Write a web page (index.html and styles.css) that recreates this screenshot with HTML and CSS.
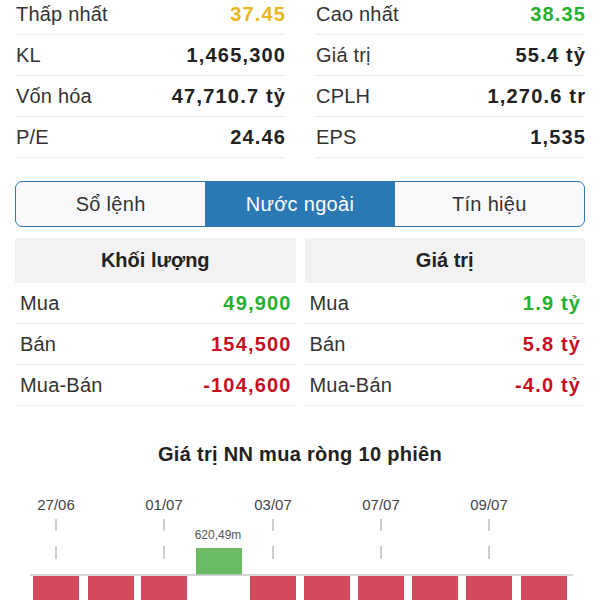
FILE: index.html
```html
<!DOCTYPE html>
<html lang="vi">
<head>
    <meta charset="UTF-8">
    <meta name="viewport" content="width=device-width, initial-scale=1.0">
    <title>Chi tiết cổ phiếu</title>
    <link rel="stylesheet" href="styles.css">
</head>
<body>
    <div class="stats">
        <div class="stat-col">
            <div class="stat-row"><span>Thấp nhất</span><b class="yellow">37.45</b></div>
            <div class="stat-row"><span>KL</span><b>1,465,300</b></div>
            <div class="stat-row"><span>Vốn hóa</span><b>47,710.7 tỷ</b></div>
            <div class="stat-row"><span>P/E</span><b>24.46</b></div>
        </div>
        <div class="stat-col">
            <div class="stat-row"><span>Cao nhất</span><b class="green">38.35</b></div>
            <div class="stat-row"><span>Giá trị</span><b>55.4 tỷ</b></div>
            <div class="stat-row"><span>CPLH</span><b>1,270.6 tr</b></div>
            <div class="stat-row"><span>EPS</span><b>1,535</b></div>
        </div>
    </div>

    <div class="segment">
        <div class="seg-item">Sổ lệnh</div>
        <div class="seg-item active">Nước ngoài</div>
        <div class="seg-item">Tín hiệu</div>
    </div>

    <div class="foreign">
        <div class="f-col">
            <div class="f-head">Khối lượng</div>
            <div class="f-row"><span>Mua</span><b class="green">49,900</b></div>
            <div class="f-row"><span>Bán</span><b class="red">154,500</b></div>
            <div class="f-row"><span>Mua-Bán</span><b class="red">-104,600</b></div>
        </div>
        <div class="f-col">
            <div class="f-head">Giá trị</div>
            <div class="f-row"><span>Mua</span><b class="green">1.9 tỷ</b></div>
            <div class="f-row"><span>Bán</span><b class="red">5.8 tỷ</b></div>
            <div class="f-row"><span>Mua-Bán</span><b class="red">-4.0 tỷ</b></div>
        </div>
    </div>

    <h2 class="chart-title">Giá trị NN mua ròng 10 phiên</h2>

    <svg class="chart" width="600" height="115" viewBox="0 0 600 115">
        <g class="axis-label">
            <text x="56" y="24">27/06</text>
            <text x="164" y="24">01/07</text>
            <text x="273" y="24">03/07</text>
            <text x="381" y="24">07/07</text>
            <text x="489" y="24">09/07</text>
        </g>
        <g class="ticks">
            <path d="M56 33V45M56 60V73M164 33V45M164 60V73M273 33V45M273 60V73M381 33V45M381 60V73M489 33V45M489 60V73"/>
        </g>
        <text class="bar-label" x="218" y="53">620,49m</text>
        <rect class="bar-up" x="196" y="62" width="46" height="27"/>
        <g class="bar-down">
            <rect x="33" y="90" width="46" height="30"/>
            <rect x="88" y="90" width="46" height="30"/>
            <rect x="141" y="90" width="46" height="30"/>
            <rect x="250" y="90" width="46" height="30"/>
            <rect x="304" y="90" width="46" height="30"/>
            <rect x="358" y="90" width="46" height="30"/>
            <rect x="412" y="90" width="46" height="30"/>
            <rect x="466" y="90" width="46" height="30"/>
            <rect x="521" y="90" width="46" height="30"/>
        </g>
        <line class="baseline" x1="30" y1="89" x2="573" y2="89"/>
    </svg>
</body>
</html>
```

FILE: styles.css
```css
body {
    margin: 0;
    font-family: "Liberation Sans", Arial, sans-serif;
    color: #333;
    background: #fff;
    overflow: hidden;
}
b {
    font-weight: 700;
    color: #222;
    letter-spacing: 1.2px;
    margin-right: -1.2px;
}
.yellow { color: #e8b820; }
.green { color: #25b02d; }
.red { color: #c70f1f; }

.stats {
    display: grid;
    grid-template-columns: 1fr 1fr;
    column-gap: 30px;
    padding: 0 15px;
    margin-top: -6px;
}
.stat-row {
    display: flex;
    justify-content: space-between;
    align-items: center;
    height: 40px;
    border-bottom: 1px solid #ebebeb;
    font-size: 20px;
    padding: 0 0 0 1px;
}
.stat-row span, .f-row span {
    letter-spacing: 0.2px;
}

.segment {
    display: flex;
    margin: 23px 15px 0;
    height: 44px;
    border: 1.5px solid #2a78b4;
    border-radius: 7px;
    overflow: hidden;
    background: #f9f9fb;
}
.seg-item {
    flex: 1;
    display: flex;
    align-items: center;
    justify-content: center;
    font-size: 20px;
    color: #333;
    letter-spacing: 0.3px;
}
.seg-item.active {
    background: #2a78b4;
    color: #fff;
}

.foreign {
    display: grid;
    grid-template-columns: 1fr 1fr;
    column-gap: 9px;
    padding: 0 15px;
    margin-top: 11px;
}
.f-head {
    height: 45px;
    background: #f2f2f2;
    display: flex;
    align-items: center;
    justify-content: center;
    font-size: 20px;
    font-weight: 700;
    color: #222;
}
.f-row {
    display: flex;
    justify-content: space-between;
    align-items: center;
    height: 40px;
    border-bottom: 1px solid #ebebeb;
    padding: 0 5px;
    font-size: 20px;
}

.chart-title {
    margin: 36px 0 0;
    text-align: center;
    font-size: 20px;
    line-height: 24px;
    font-weight: 700;
    color: #222;
    letter-spacing: 0.3px;
}
.chart {
    display: block;
    margin-top: 20px;
}
.axis-label text {
    font-family: "Liberation Sans", Arial, sans-serif;
    font-size: 15px;
    fill: #444;
    text-anchor: middle;
}
.ticks path {
    stroke: #bdbdbd;
    stroke-width: 1.5;
}
.bar-label {
    font-family: "Liberation Sans", Arial, sans-serif;
    font-size: 12px;
    fill: #555;
    text-anchor: middle;
}
.bar-up { fill: #6abb63; }
.bar-down rect { fill: #d24a5b; }
.baseline {
    stroke: #c8c8c8;
    stroke-width: 1.5;
}
```
